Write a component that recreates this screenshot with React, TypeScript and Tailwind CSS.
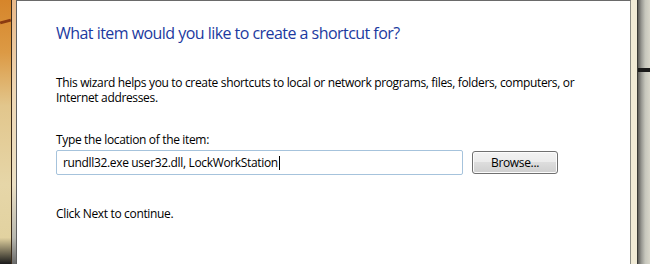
import React from "react";

export default function App() {
  return (
    <div className="flex h-[264px] w-[650px] overflow-hidden bg-white" style={{ fontFamily: '"Open Sans", "Noto Sans", sans-serif' }}>
      {/* left desktop strip */}
      <div className="relative h-full w-[11px] bg-[linear-gradient(180deg,#d6852a_0%,#dc9a45_20%,#e2c68c_40%,#e6d6a8_70%,#e2d2a0_90%,#1a1a1a_100%)]">
        <div className="absolute left-0 top-[20px] h-[3px] w-[11px] rotate-[-15deg] bg-[#8a3a10]" />
      </div>
      {/* left frame */}
      <div className="h-full w-[5px] border-l border-[#3b2c1c] bg-[linear-gradient(180deg,#e8b98a_0%,#eed7b5_35%,#ece0c4_70%,#b8b8b0_90%,#6a6a6a_100%)]" />
      {/* panel */}
      <div className="h-full flex-1 border-x border-t border-l-[#5f5f5f] border-r-[#8c8c84] border-t-[#6a6a6a] bg-white pl-[39px] pt-[22px] text-[12px] tracking-[-0.34px] text-black">
        <div className="text-[16px] leading-[20px] tracking-[-0.54px] text-[#1c3aa0]">What item would you like to create a shortcut for?</div>
        <div className="mt-[32px] leading-[15px]">
          This wizard helps you to create shortcuts to local or network programs, files, folders, computers, or
          <br />
          Internet addresses.
        </div>
        <div className="mt-[27px] leading-[15px]">Type the location of the item:</div>
        <div className="mt-[3px] flex items-start">
          <div className="flex h-[25px] w-[407px] items-center rounded-[2px] border border-[#a6c3dc] pl-[6px]">
            <span>rundll32.exe user32.dll, LockWorkStation</span>
            <span className="ml-[1px] h-[14px] w-px bg-black" />
          </div>
          <button className="ml-[9px] mt-px flex h-[23px] w-[86px] items-center justify-center rounded-[3px] border border-[#707070] bg-[linear-gradient(180deg,#f3f3f3_0%,#ebebeb_50%,#dddddd_50%,#cfcfcf_100%)] text-[12px] shadow-[inset_0_0_0_1px_#fcfcfc]">
            Browse...
          </button>
        </div>
        <div className="mt-[31px] leading-[15px]">Click Next to continue.</div>
      </div>
      {/* right frame */}
      <div className="h-full w-[6px] bg-[#f1ebd6]" />
      <div className="relative h-full w-[13px] border-l border-[#3a3a36] bg-[linear-gradient(90deg,#5e5e5a_0%,#9a9a94_30%,#c6c6bc_60%,#d8d6ca_100%)]">
        <div className="absolute left-0 top-[68px] h-[4px] w-[12px] bg-[#1a1a1a]" />
      </div>
    </div>
  );
}
